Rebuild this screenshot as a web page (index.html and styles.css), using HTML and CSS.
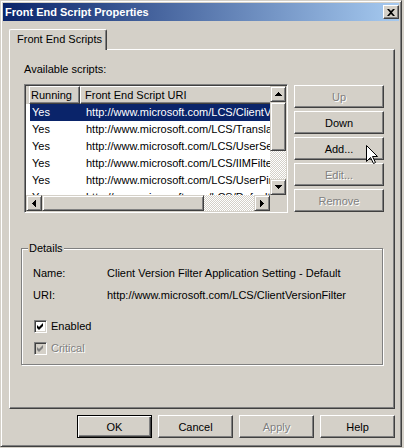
FILE: index.html
```html
<!DOCTYPE html>
<html>
<head>
<meta charset="utf-8">
<link rel="stylesheet" href="styles.css">
</head>
<body>
<div class="window">
  <div class="titlebar">
    <span class="title">Front End Script Properties</span>
    <span class="close"><svg width="8" height="7" viewBox="0 0 8 7"><path d="M0 0h2l2 2 2-2h2L5 3.5 8 7H6L4 5 2 7H0l3-3.5z" fill="#000"/></svg></span>
  </div>
  <div class="client">
    <div class="tabs"><div class="tab">Front End Scripts</div></div>
    <div class="panel">
      <div class="avail">Available scripts:</div>
      <div class="list-row">
        <div class="listview">
          <div class="lv-main">
            <div class="lv-area">
              <div class="lv-header">
                <div class="hd hd1">Running</div>
                <div class="hd hd2">Front End Script URI</div>
              </div>
              <div class="lv-rows">
                <div class="row sel"><span class="c1">Yes</span><span class="c2">http://www.microsoft.com/LCS/ClientVersionFilter</span></div>
                <div class="row"><span class="c1">Yes</span><span class="c2">http://www.microsoft.com/LCS/Translator</span></div>
                <div class="row"><span class="c1">Yes</span><span class="c2">http://www.microsoft.com/LCS/UserServices</span></div>
                <div class="row"><span class="c1">Yes</span><span class="c2">http://www.microsoft.com/LCS/IIMFilter</span></div>
                <div class="row"><span class="c1">Yes</span><span class="c2">http://www.microsoft.com/LCS/UserPin</span></div>
                <div class="row"><span class="c1">Yes</span><span class="c2">http://www.microsoft.com/LCS/DefaultRouting</span></div>
              </div>
            </div>
            <div class="vscroll">
              <div class="sb-btn"><svg width="7" height="4" viewBox="0 0 7 4"><path d="M3 0h1v1h1v1h1v1h1v1H0V3h1V2h1V1h1z"/></svg></div>
              <div class="vthumb"></div>
              <div class="track"></div>
              <div class="sb-btn"><svg width="7" height="4" viewBox="0 0 7 4"><path d="M0 0h7v1H6v1H5v1H4v1H3V3H2V2H1V1H0z"/></svg></div>
            </div>
          </div>
          <div class="hscroll-row">
            <div class="hscroll">
              <div class="sb-btn"><svg width="4" height="7" viewBox="0 0 4 7"><path d="M3 0h1v7H3V6H2V5H1V4H0V3h1V2h1V1h1z"/></svg></div>
              <div class="hthumb"></div>
              <div class="track"></div>
              <div class="sb-btn"><svg width="4" height="7" viewBox="0 0 4 7"><path d="M0 0h1v1h1v1h1v1h1v1H3v1H2v1H1v1H0z"/></svg></div>
            </div>
            <div class="corner"></div>
          </div>
        </div>
        <div class="side">
          <div class="btn side-btn disabled">Up</div>
          <div class="btn side-btn">Down</div>
          <div class="btn side-btn">Add...</div>
          <div class="btn side-btn disabled">Edit...</div>
          <div class="btn side-btn disabled">Remove</div>
        </div>
      </div>
      <div class="group">
        <span class="legend">Details</span>
        <div class="field"><span class="fl">Name:</span><span>Client Version Filter Application Setting - Default</span></div>
        <div class="field field2"><span class="fl">URI:</span><span>http://www.microsoft.com/LCS/ClientVersionFilter</span></div>
        <div class="check check1">
          <span class="box"><svg width="9" height="9" viewBox="0 0 9 9"><path d="M1 3l2 2 4-4v3l-4 4-2-2z" fill="#000"/></svg></span>
          <span>Enabled</span>
        </div>
        <div class="check check2 disabled">
          <span class="box box-dis"><svg width="9" height="9" viewBox="0 0 9 9"><path d="M1 3l2 2 4-4v3l-4 4-2-2z" fill="#808080"/></svg></span>
          <span>Critical</span>
        </div>
      </div>
    </div>
    <div class="footer">
      <div class="btn foot-btn default">OK</div>
      <div class="btn foot-btn">Cancel</div>
      <div class="btn foot-btn disabled">Apply</div>
      <div class="btn foot-btn">Help</div>
    </div>
  </div>
  <svg class="cursor" width="13" height="20" viewBox="0 0 13 20"><path d="M0.5 0.5V16.5L4.5 12.5L7.5 18.5L9.5 17.5L6.5 11.5H11.5Z" fill="#fff" stroke="#000" stroke-width="1"/></svg>
</div>
</body>
</html>
```

FILE: styles.css
```css
body {
  margin: 0;
  background: #d4d0c8;
  font: 11px "Liberation Sans", Arial, sans-serif;
  color: #000;
}

.window {
  position: relative;
  width: 402px;
  height: 447px;
  box-sizing: border-box;
  border: 1px solid;
  border-color: #d4d0c8 #404040 #404040 #d4d0c8;
  box-shadow: inset 1px 1px #fff, inset -1px -1px #808080;
  padding: 2px;
  background: #d4d0c8;
  display: flex;
  flex-direction: column;
}

.titlebar {
  height: 18px;
  display: flex;
  align-items: center;
  justify-content: space-between;
  background: linear-gradient(90deg, #0a246a, #a6caf0);
  color: #fff;
  font-weight: bold;
  padding-left: 2px;
}

.close {
  width: 16px;
  height: 14px;
  box-sizing: border-box;
  background: #d4d0c8;
  border: 1px solid;
  border-color: #fff #404040 #404040 #fff;
  box-shadow: inset -1px -1px #808080;
  display: flex;
  align-items: center;
  justify-content: center;
}

.client {
  padding: 8px 0 0 6px;
}

.tabs {
  display: flex;
}

.tab {
  position: relative;
  z-index: 1;
  width: 98px;
  height: 21px;
  box-sizing: border-box;
  margin-bottom: -1px;
  background: #d4d0c8;
  border-top: 1px solid #fff;
  border-left: 1px solid #fff;
  border-right: 1px solid #404040;
  box-shadow: inset -1px 0 #808080;
  border-radius: 2px 2px 0 0;
  padding-left: 7px;
  line-height: 19px;
}

.panel {
  width: 386px;
  height: 360px;
  box-sizing: border-box;
  border: 1px solid;
  border-color: #fff #404040 #404040 #fff;
  box-shadow: inset -1px -1px #808080;
  padding: 13px 0 0 14px;
}

.avail {
  line-height: 13px;
  height: 13px;
}

.list-row {
  display: flex;
  gap: 6px;
  margin-top: 8px;
}

.listview {
  width: 264px;
  height: 129px;
  box-sizing: border-box;
  border: 1px solid;
  border-color: #808080 #fff #fff #808080;
  box-shadow: inset 1px 1px #404040, inset -1px -1px #d4d0c8;
  padding: 1px;
  display: flex;
  flex-direction: column;
}

.lv-main {
  display: flex;
  height: 109px;
}

.lv-area {
  flex: 1;
  min-width: 0;
  background: #fff;
  overflow: hidden;
}

.lv-header {
  display: flex;
  height: 18px;
  background: #d4d0c8;
  padding-left: 3px;
}

.hd {
  box-sizing: border-box;
  height: 18px;
  border: 1px solid;
  border-color: #fff #404040 #404040 #fff;
  box-shadow: inset -1px -1px #808080;
  line-height: 16px;
  white-space: nowrap;
  overflow: hidden;
  flex: none;
}

.hd1 {
  width: 51px;
  padding-left: 1px;
}

.hd2 {
  width: 220px;
  padding-left: 4px;
}

.lv-rows {
  height: 91px;
  overflow: hidden;
}

.row {
  display: flex;
  height: 17px;
  line-height: 17px;
  margin-left: 4px;
  padding-left: 2px;
  white-space: nowrap;
}

.row.sel {
  background: #0a246a;
  color: #fff;
}

.c1 {
  width: 54px;
  flex: none;
}

.c2 {
  flex: none;
}

.vscroll {
  width: 16px;
  display: flex;
  flex-direction: column;
}

.sb-btn,
.vthumb,
.hthumb {
  box-sizing: border-box;
  background: #d4d0c8;
  border: 1px solid;
  border-color: #d4d0c8 #404040 #404040 #d4d0c8;
  box-shadow: inset 1px 1px #fff, inset -1px -1px #808080;
  flex: none;
}

.sb-btn {
  width: 16px;
  height: 16px;
  display: flex;
  align-items: center;
  justify-content: center;
}

.sb-btn svg {
  fill: #000;
}

.vthumb {
  height: 49px;
}

.hthumb {
  width: 162px;
}

.track {
  flex: 1;
  background: repeating-conic-gradient(#fff 0 25%, #d4d0c8 0 50%) 0 0 / 2px 2px;
}

.hscroll-row {
  display: flex;
  height: 16px;
}

.hscroll {
  flex: 1;
  display: flex;
}

.corner {
  width: 16px;
  background: #d4d0c8;
}

.side {
  display: flex;
  flex-direction: column;
  gap: 3px;
  margin-top: 1px;
}

.btn {
  box-sizing: border-box;
  height: 23px;
  border: 1px solid;
  border-color: #fff #404040 #404040 #fff;
  box-shadow: inset -1px -1px #808080;
  display: flex;
  align-items: center;
  justify-content: center;
  background: #d4d0c8;
}

.side-btn {
  width: 90px;
}

.disabled {
  color: #808080;
  text-shadow: 1px 1px #fff;
}

.group {
  position: relative;
  width: 362px;
  height: 117px;
  box-sizing: border-box;
  margin: 35px 0 0 -3px;
  border: 1px solid #808080;
  box-shadow: inset 1px 1px #fff, 1px 1px #fff;
  padding: 18px 0 0 11px;
}

.legend {
  position: absolute;
  left: 6px;
  top: -7px;
  padding: 0 1px;
  background: #d4d0c8;
  line-height: 13px;
}

.field {
  display: flex;
  line-height: 13px;
  white-space: nowrap;
}

.field2 {
  margin-top: 9px;
}

.fl {
  width: 74px;
  flex: none;
}

.check {
  display: flex;
  align-items: center;
  gap: 4px;
  margin-left: 1px;
  height: 13px;
  line-height: 13px;
}

.check1 {
  margin-top: 18px;
}

.check2 {
  margin-top: 9px;
}

.box {
  width: 13px;
  height: 13px;
  box-sizing: border-box;
  border: 1px solid;
  border-color: #808080 #fff #fff #808080;
  box-shadow: inset 1px 1px #404040, inset -1px -1px #d4d0c8;
  background: #fff;
  display: flex;
  align-items: center;
  justify-content: center;
}

.box-dis {
  background: #d4d0c8;
}

.footer {
  display: flex;
  justify-content: flex-end;
  gap: 6px;
  width: 386px;
  margin-top: 6px;
}

.foot-btn {
  width: 75px;
}

.btn.default {
  border: 1px solid #000;
  box-shadow: inset 1px 1px #fff, inset -1px -1px #404040, inset -2px -2px #808080;
}

.cursor {
  position: absolute;
  left: 365px;
  top: 144px;
}
```
